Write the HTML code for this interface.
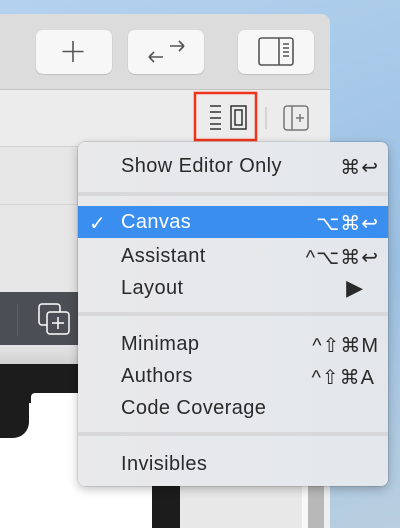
<!DOCTYPE html>
<html><head><style>
body{margin:0;width:400px;height:528px;overflow:hidden;position:relative;font-family:"Liberation Sans","DejaVu Sans",sans-serif;background:linear-gradient(160deg,#b4d2ef,#9cc0e2 60%,#b9cfe0);}
.a{position:absolute}
.btn{position:absolute;top:30px;width:76px;height:44px;background:#f7f7f7;border-radius:7px;box-shadow:0 0.5px 1px rgba(0,0,0,.25);}
.menu{position:absolute;left:78px;top:142px;width:310px;height:344px;border-radius:7px;background:linear-gradient(90deg,#e9e9eb,#e3e7ec);box-shadow:0 3px 10px rgba(0,0,0,.25),0 0 0 0.5px rgba(0,0,0,.2);}
.it{position:absolute;left:0;right:0;height:32px;font-size:20px;color:#2a2a2a;letter-spacing:0.4px}
.it .t{position:absolute;left:43px;top:6px}
.it .k{position:absolute;right:9px;top:6px;letter-spacing:1px}
.sep{position:absolute;left:0;right:0;height:4px;background:#d8d8da}
</style></head><body>
<div class="a" style="left:0;top:14px;width:330px;height:514px;border-top-right-radius:9px;overflow:hidden;background:#e6e6e6">
 <div class="a" style="left:0;top:0;width:330px;height:75px;background:#dcdcdc;border-bottom:1px solid #c4c4c4"></div>
 <div class="a" style="left:0;top:76px;width:330px;height:56px;background:#ececec;border-bottom:1px solid #d0d0d0"></div>
 <div class="a" style="left:0;top:190px;width:330px;height:1px;background:#d6d6d6"></div>
 <div class="a" style="left:0;top:278px;width:330px;height:53px;background:#4b4e54"></div>
 <div class="a" style="left:17px;top:290px;width:1px;height:32px;background:#5d6066"></div>
 <div class="a" style="left:0;top:331px;width:330px;height:19px;background:linear-gradient(#e4e4e4,#d2d2d2)"></div>
 <div class="a" style="left:0;top:350px;width:330px;height:164px;background:#1c1c1c"></div>
 <div class="a" style="left:0;top:379px;width:152px;height:140px;background:#fff"></div>
 <div class="a" style="left:0;top:379px;width:29px;height:45px;background:#1c1c1c;border-bottom-right-radius:16px"></div>
 <div class="a" style="left:27px;top:379px;width:10px;height:10px;background:#1c1c1c"></div>
 <div class="a" style="left:31px;top:379px;width:10px;height:10px;background:#fff;border-top-left-radius:4px"></div>
 <div class="a" style="left:180px;top:350px;width:122px;height:170px;background:#e8e8e8"></div>
 <div class="a" style="left:302px;top:350px;width:6px;height:170px;background:#f8f8f8"></div>
 <div class="a" style="left:308px;top:350px;width:16px;height:170px;background:#b8b8b8"></div>
 <div class="a" style="left:324px;top:350px;width:6px;height:170px;background:#eee"></div>
</div>
<div class="btn" style="left:36px"></div>
<div class="btn" style="left:128px"></div>
<div class="btn" style="left:238px"></div>
<svg class="a" style="left:0;top:0" width="400" height="528" fill="none" stroke="#555" stroke-width="1.6">
 <path d="M73 41v21M62.5 51.5h21"/>
 <path d="M149 57h14M149 57l5-5M149 57l5 5M184 46h-14M184 46l-5-5M184 46l-5 5"/>
 <rect x="259" y="38" width="34" height="27" rx="2.5"/><path d="M279 38v27M283 44h6M283 48h6M283 52h6M283 56h6"/>
 <rect x="195" y="93" width="61" height="47" fill="none" stroke="#f0341c" stroke-width="2.5"/>
 <path d="M210 106h11M210 112h11M210 118h11M210 124h11M210 129h11" stroke="#333" stroke-width="1.5"/>
 <rect x="231" y="106" width="15" height="23" stroke="#333" stroke-width="1.5"/><rect x="235" y="110" width="7" height="15" stroke="#333" stroke-width="1.5"/>
 <path d="M266 107v22" stroke="#ccc" stroke-width="1.5"/>
 <rect x="284" y="106" width="24" height="24" rx="3" stroke="#777" stroke-width="1.5"/><path d="M292 106v24M296 118h8M300 114v8" stroke="#777" stroke-width="1.5"/>
 <rect x="39" y="304" width="21" height="21" rx="3" stroke="#fff" stroke-width="1.5"/>
 <rect x="47" y="312" width="22" height="22" rx="3" fill="#4b4e54" stroke="#fff" stroke-width="1.5"/><path d="M58 317v12M52 323h12" stroke="#fff" stroke-width="1.5"/>
</svg>
<div class="menu">
 <div class="it" style="top:7px"><span class="t">Show Editor Only</span><span class="k">⌘↩</span></div>
 <div class="sep" style="top:50px"></div>
 <div class="it" style="top:64px;height:32px;background:#3a8ef0;color:#fff"><span class="a" style="left:11px;top:5px">✓</span><span class="t" style="top:5px">Canvas</span><span class="k" style="top:5px">⌥⌘↩</span></div>
 <div class="it" style="top:97px"><span class="t">Assistant</span><span class="k">^⌥⌘↩</span></div>
 <div class="it" style="top:129px"><span class="t">Layout</span><span class="k" style="right:24px;font-size:22px;top:4px">▶</span></div>
 <div class="sep" style="top:170px"></div>
 <div class="it" style="top:185px"><span class="t">Minimap</span><span class="k">^⇧⌘M</span></div>
 <div class="it" style="top:217px"><span class="t">Authors</span><span class="k" style="right:13px">^⇧⌘A</span></div>
 <div class="it" style="top:249px"><span class="t">Code Coverage</span></div>
 <div class="sep" style="top:290px"></div>
 <div class="it" style="top:305px"><span class="t">Invisibles</span></div>
</div>
</body></html>
